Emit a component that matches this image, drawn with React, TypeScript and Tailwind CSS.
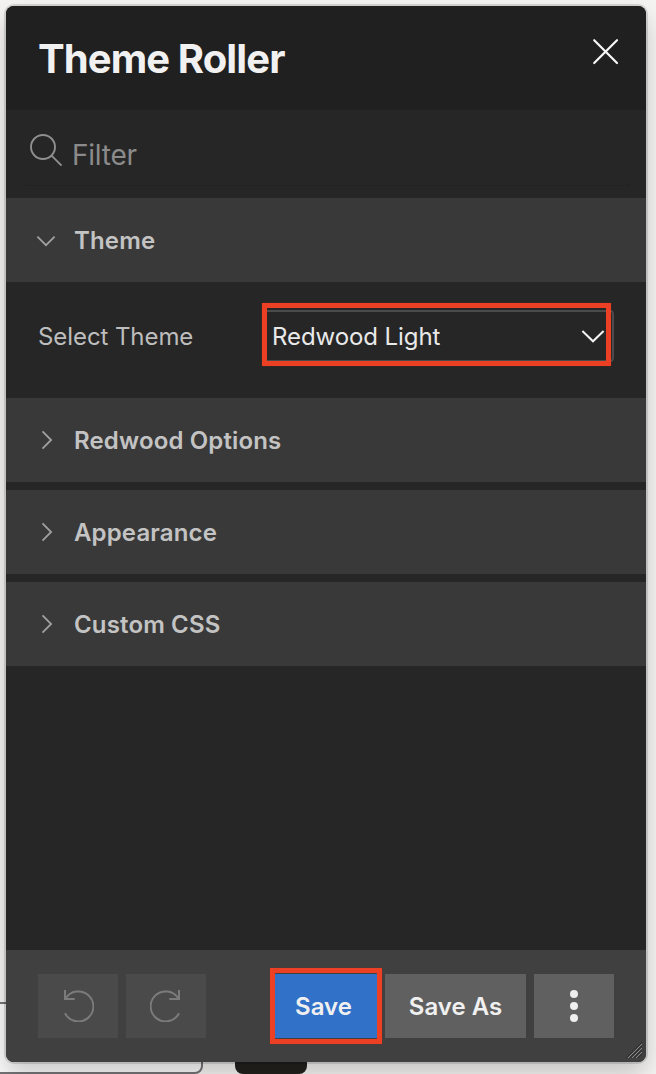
import type { ReactNode } from "react";

function Chevron({ open }: { open?: boolean }) {
  return (
    <svg className="h-8 w-8 shrink-0" viewBox="0 0 32 32" fill="none" stroke="#a0a0a0" strokeWidth="1.8">
      <path d={open ? "M7.4 12.6 16 21.2l8.6-8.6" : "M12.5 7.4 21.1 16l-8.6 8.6"} />
    </svg>
  );
}

function SectionHeader({ children, open }: { children: ReactNode; open?: boolean }) {
  return (
    <button className="flex h-[84px] w-full shrink-0 items-center gap-3 bg-[#393939] pl-6 text-left text-[24px] font-semibold text-[#c3c3c3]">
      <Chevron open={open} />
      <span className="pt-[2px] tracking-[0.15px]">{children}</span>
    </button>
  );
}

function UndoIcon({ flip }: { flip?: boolean }) {
  return (
    <svg
      className={flip ? "h-8 w-8 -scale-x-100" : "h-8 w-8"}
      viewBox="0 0 32 32"
      fill="none"
      stroke="#7b7b7b"
      strokeWidth="2"
    >
      <path d="M3 0v9h9.7M3.6 8.6A15 15 0 1 1 3 23.2" />
    </svg>
  );
}

export default function App() {
  return (
    <div className="relative h-[1074px] w-[656px] overflow-hidden bg-[#f5f4f3] p-1.5 pr-2.5 font-['Inter',sans-serif]">
      <div className="absolute -left-4 top-[1002px] h-[72px] w-[219px] rounded-lg border-2 border-[#747476] bg-[#fafafa]" />
      <div className="absolute left-[235px] top-[1040px] h-[34px] w-[72px] rounded-lg bg-[#22211e]" />
      <main className="relative flex h-[1056px] w-[640px] flex-col rounded-lg bg-[#262626] shadow-[0_0_0_2px_rgba(0,0,0,0.13),0_12px_26px_rgba(0,0,0,0.2)]">
        <header className="flex h-[104px] shrink-0 justify-between rounded-t-lg bg-[#202020] pl-8 pr-6 pt-7">
          <h1 className="text-[40px] font-bold leading-[50px] tracking-[-0.9px] text-[#f1f1f1]">Theme Roller</h1>
          <svg className="mt-[2px] h-8 w-8" viewBox="0 0 32 32" stroke="#f7f7f7" strokeWidth="2.2" strokeLinecap="round">
            <path d="m4.2 4.2 22.8 22.8m0-22.8L4.2 27" />
          </svg>
        </header>
        <div className="h-[88px] shrink-0 px-4 py-3">
          <div className="flex h-16 items-start gap-[10px] rounded border-b border-[#232323] pl-2 pt-3">
            <svg className="h-8 w-8" viewBox="0 0 32 32" fill="none" stroke="#8f8f8f" strokeWidth="1.9">
              <circle cx="13" cy="13" r="12" />
              <path d="m21.6 21.6 10 10" />
            </svg>
            <span className="pt-[3px] text-[28px] leading-[36px] tracking-[-0.25px] text-[#8b8b8b]">Filter</span>
          </div>
        </div>
        <SectionHeader open>Theme</SectionHeader>
        <div className="flex h-[116px] shrink-0 items-start px-8 pt-7">
          <span className="w-[224px] shrink-0 pt-[2px] text-[24px] leading-[50px] tracking-[-0.08px] text-[#bdbdbd]">
            Select Theme
          </span>
          <div className="relative flex h-[52px] w-[352px] items-center justify-between rounded-[4px] border-2 border-[#4b4b4b] pl-2 pr-[7px]">
            <span className="pt-[2px] text-[24px] leading-[48px] tracking-[-0.08px] text-[#e9e9e9]">Redwood Light</span>
            <svg className="h-6 w-6" viewBox="0 0 24 24" fill="none" stroke="#f4f4f4" strokeWidth="2">
              <path d="m1.4 7 10.6 10.3L22.6 7" />
            </svg>
            <div className="absolute left-[-2.5px] top-[-9px] h-[63px] w-[349px] border-[5px] border-[#eb4024] shadow-[0_0_1px_#7b2c20]" />
          </div>
        </div>
        <div className="flex shrink-0 flex-col gap-2">
          <SectionHeader>Redwood Options</SectionHeader>
          <SectionHeader>Appearance</SectionHeader>
          <SectionHeader>Custom CSS</SectionHeader>
        </div>
        <footer className="relative mt-auto flex h-[112px] gap-2 rounded-b-lg bg-[#404040] px-8 pt-6 text-[24px] font-semibold text-[#f0f0f0]">
          <button className="flex h-16 w-20 items-center justify-center bg-[#4a4a4a]"><UndoIcon /></button>
          <button className="flex h-16 w-20 items-center justify-center bg-[#4a4a4a]"><UndoIcon flip /></button>
          <button className="relative ml-auto h-16 w-[105px] bg-[#3171c8] pr-[2px] pt-[2px]">
            Save
            <div className="absolute left-[-2px] top-[-6px] h-[76px] w-[112px] border-[5px] border-[#eb4024] shadow-[0_0_1px_#7b2c20]" />
          </button>
          <button className="h-16 w-[141px] bg-[#606060] pt-[2px]">Save As</button>
          <button className="flex h-16 w-20 items-center justify-center bg-[#606060]">
            <svg className="h-8 w-8" viewBox="0 0 32 32" fill="#eee">
              <circle cx="16" cy="4" r="4" />
              <circle cx="16" cy="16" r="4" />
              <circle cx="16" cy="28" r="4" />
            </svg>
          </button>
          <svg className="absolute bottom-1 right-1 h-4 w-4" viewBox="0 0 16 16" strokeWidth="1">
            <path d="M0 16 16 0M4 16 16 4M8 16 16 8M12 16 16 12" stroke="#303030" />
            <path d="M2 16 16 2M6 16 16 6M10 16 16 10" stroke="#888" />
          </svg>
        </footer>
      </main>
    </div>
  );
}
